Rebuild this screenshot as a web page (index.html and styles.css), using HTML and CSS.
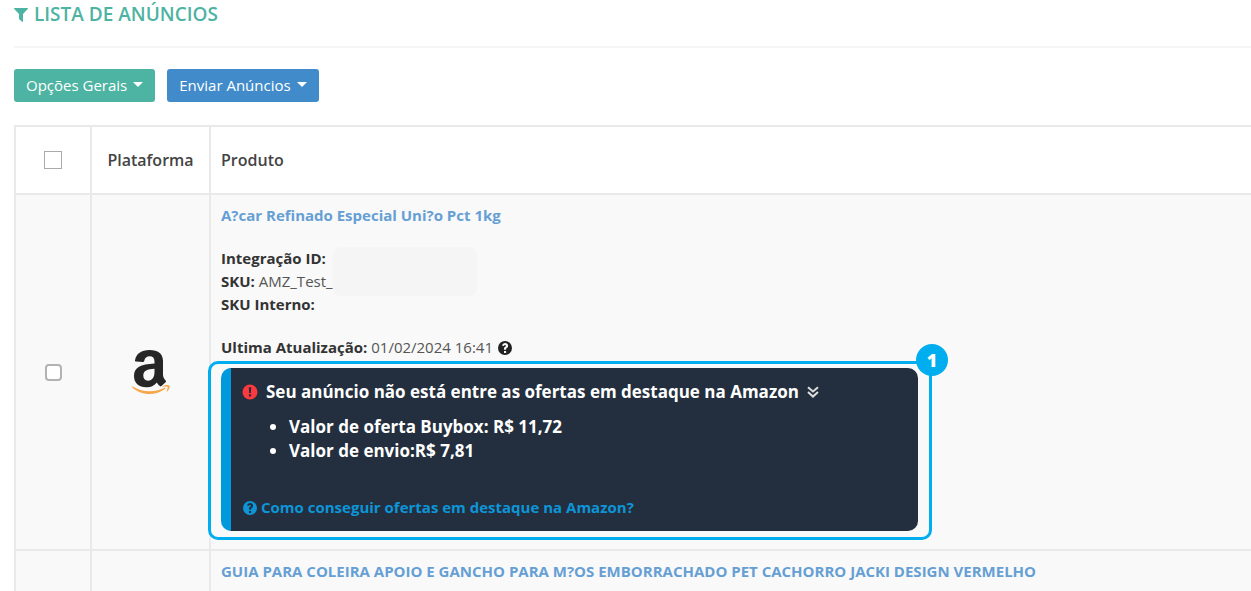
FILE: index.html
```html
<!DOCTYPE html>
<html lang="pt-BR">
<head>
  <meta charset="UTF-8">
  <meta name="viewport" content="width=device-width, initial-scale=1.0">
  <title>Lista de Anúncios</title>
  <link rel="stylesheet" href="styles.css">
</head>
<body>
  <!-- Ícones reutilizados -->
  <svg class="sprite" aria-hidden="true">
    <symbol id="icon-question" viewBox="0 0 16 16">
      <path fill-rule="evenodd" d="M8 1a7 7 0 1 0 0 14A7 7 0 0 0 8 1zM7 11h2.100v2H7zM5 5.600C5.500 4 6.500 3.100 8.100 3.100c1.700 0 3 1.100 3 2.600 0 1.200-.6 1.800-1.300 2.300-.5.300-.7.500-.7.900v.9H7V8.800c0-1 .5-1.600 1.200-2 .5-.3.700-.5.700-.9 0-.5-.4-.8-.9-.8-.6 0-.9.300-1.300 1z"/>
    </symbol>
  </svg>

  <header class="portlet-title">
    <svg class="icon-filter" viewBox="0 0 14 14" aria-hidden="true">
      <path d="M0.500 0h13c.5 0 .6.500.3.900L9 6v7.300c0 .5-.5.800-.9.400L5.300 11.200C5.100 11 5 10.800 5 10.600V6L.2.900C-.1.500 0 0 .5 0z"/>
    </svg>
    <h1>LISTA DE ANÚNCIOS</h1>
  </header>

  <div class="toolbar">
    <button type="button" class="btn btn-green">Opções Gerais <span class="caret"></span></button>
    <button type="button" class="btn btn-blue">Enviar Anúncios <span class="caret"></span></button>
  </div>

  <table class="table">
    <thead>
      <tr>
        <th class="col-check"><input type="checkbox" class="check check-all" aria-label="Selecionar todos"></th>
        <th class="col-platform">Plataforma</th>
        <th>Produto</th>
      </tr>
    </thead>
    <tbody>
      <tr>
        <td class="col-check"><input type="checkbox" class="check" aria-label="Selecionar anúncio"></td>
        <td class="col-platform">
          <svg class="logo-amazon" viewBox="0 0 38 46" role="img" aria-label="Amazon">
            <path fill="#262626" fill-rule="evenodd" d="M3 11.500C4 4.500 9.500 1 17.500 1 26 1 31 4.600 31 12v13.500c0 2.600 1 4 2.800 6.200.4.500.4 1 0 1.400l-4.300 4c-.6.500-1.100.5-1.600 0-1.500-1.300-2.100-2.200-3.100-3.700-3.100 3.300-5.700 4.800-10.600 4.800C6.700 38.200 2 34 2 27c0-8.500 6.500-11.500 20.500-12.400v-2c0-3.600-1.700-5.300-4.900-5.300-3 0-4.700 1.500-5.400 4.700-.2.800-.6 1.100-1.300 1L4 12.500c-.7-.1-1.100-.4-1-1zM22.500 19.700c-7.100.2-11.200 2-11.200 6.800 0 3.300 1.700 5.200 4.700 5.200 4.200 0 6.500-3.700 6.500-8.700z"/>
            <path fill="#f8a64a" d="M0 37.200c9 5.600 21.500 7 32.500 1.500.9-.4 1.500.5.700 1.100C23.500 47.500 8 46.500 0 38z"/>
            <path fill="#f8a64a" d="M30.500 37.300c2.300-1.600 5.500-1.700 6.900-.9.700 1.600-.4 4.600-2.200 6.100-.4.300-.8.100-.6-.4.500-1.300 1.400-3.500.9-4.200-.5-.6-3.100-.4-4.500-.2-.6.100-.9-.1-.5-.4z"/>
          </svg>
        </td>
        <td>
          <a href="#" class="product-link">A?car Refinado Especial Uni?o Pct 1kg</a>
          <div class="details">
            <div><b>Integração ID:</b></div>
            <div><b>SKU:</b> AMZ_Test_</div>
            <div><b>SKU Interno:</b></div>
            <span class="redacted"></span>
          </div>
          <div class="updated"><b>Ultima Atualização:</b> 01/02/2024 16:41 <svg class="icon icon-dark"><use href="#icon-question"/></svg></div>

          <div class="highlight">
            <section class="alert">
              <h2 class="alert-title">
                <svg class="icon" viewBox="0 0 16 16" aria-hidden="true">
                  <circle cx="8" cy="8" r="7.500" fill="#fb3a3f"/>
                  <path fill="#232f3e" d="M6.800 3.300h2.400L8.900 9H7.100zM6.900 10.300h2.200v2.300H6.900z"/>
                </svg>
                <span>Seu anúncio não está entre as ofertas em destaque na Amazon</span>
                <svg class="icon-down" viewBox="0 0 12 12" aria-hidden="true">
                  <path d="M1 1.200l5 4.300 5-4.300M1 6l5 4.600L11 6"/>
                </svg>
              </h2>
              <ul class="alert-list">
                <li>Valor de oferta Buybox: R$ 11,72</li>
                <li>Valor de envio:R$ 7,81</li>
              </ul>
              <a href="#" class="alert-link"><svg class="icon"><use href="#icon-question"/></svg>Como conseguir ofertas em destaque na Amazon?</a>
            </section>
            <span class="badge">1</span>
          </div>
        </td>
      </tr>
      <tr>
        <td class="col-check"></td>
        <td class="col-platform"></td>
        <td><a href="#" class="product-link">GUIA PARA COLEIRA APOIO E GANCHO PARA M?OS EMBORRACHADO PET CACHORRO JACKI DESIGN VERMELHO</a></td>
      </tr>
    </tbody>
  </table>
</body>
</html>
```

FILE: styles.css
```css
* {
  box-sizing: border-box;
}

body {
  margin: 0;
  padding-left: 14px;
  overflow: hidden;
  background: #fff;
  color: #555;
  font-family: "Open Sans", sans-serif;
  font-size: 15px;
  line-height: 23px;
}

a {
  text-decoration: none;
}

b {
  color: #333;
}

.sprite {
  display: none;
}

.icon {
  width: 16px;
  height: 16px;
  fill: currentColor;
  vertical-align: -3px;
}

.icon-dark {
  color: #222;
}

/* Título */
.portlet-title {
  display: flex;
  align-items: center;
  gap: 6px;
  height: 48px;
  padding-bottom: 17px;
  border-bottom: 2px solid #f5f5f5;
  color: #4db3a2;
}

.portlet-title h1 {
  margin: 0;
  font-size: 19px;
  font-weight: 600;
}

.icon-filter {
  width: 14px;
  height: 14px;
  fill: currentColor;
}

/* Botões */
.toolbar {
  display: flex;
  gap: 12px;
  padding: 21px 0 23px;
}

.btn {
  display: flex;
  align-items: center;
  gap: 6px;
  height: 33px;
  padding: 0 12px 2px;
  border: 0;
  border-radius: 3px;
  color: #fff;
  font-family: inherit;
  font-size: 15px;
  cursor: pointer;
}

.btn-green {
  background: #4db3a2;
}

.btn-blue {
  background: #428bca;
}

.caret {
  border-top: 5px solid #fff;
  border-left: 5px solid transparent;
  border-right: 5px solid transparent;
}

/* Tabela */
.table {
  width: 100%;
  border-collapse: collapse;
}

.table th,
.table td {
  padding: 9px 10px;
  border: 2px solid #e9e9e9;
  border-right: 0;
  text-align: left;
}

.table th {
  height: 68px;
  color: #444;
  font-size: 16px;
  font-weight: 600;
}

.table td {
  background: #f9f9f9;
}

.table .col-check {
  width: 76px;
  text-align: center;
}

.table .col-platform {
  width: 119px;
  text-align: center;
}

.check {
  appearance: none;
  display: block;
  width: 17px;
  height: 17px;
  margin: 0 auto;
  border: 2px solid #b2b2b2;
  border-radius: 4px;
  background: #fff;
}

.check-all {
  width: 18px;
  height: 18px;
  border: 1px solid #aaa;
  border-radius: 0;
}

.logo-amazon {
  display: block;
  width: 38px;
  height: 46px;
  margin: 0 auto;
}

.product-link {
  display: block;
  color: #659fd4;
  font-size: 15px;
  font-weight: 700;
}

.details {
  position: relative;
  margin: 20px 0;
}

/* Dados ocultos do vendedor */
.redacted {
  position: absolute;
  top: 0;
  left: 112px;
  width: 144px;
  height: 49px;
  border-radius: 8px;
  background: #f5f5f5;
}

/* Alerta da Amazon */
.highlight {
  position: relative;
  max-width: 697px;
  margin: 9px 0;
}

.highlight::before {
  content: "";
  position: absolute;
  inset: -7px -14px -9px -13px;
  border: 3px solid #00aeef;
  border-radius: 10px;
}

.alert {
  padding: 12px 11px;
  border-left: 10px solid #0099dc;
  border-radius: 10px;
  background: #232f3e;
  color: #fff;
  font-size: 17px;
  font-weight: 700;
}

.alert-title {
  display: flex;
  align-items: center;
  gap: 8px;
  margin: 0 0 12px;
  font-size: 17px;
}

.icon-down {
  width: 12px;
  height: 12px;
  fill: none;
  stroke: #ddd;
  stroke-width: 2;
}

.alert-list {
  margin: 0 0 33px;
  padding-left: 47px;
  line-height: 24px;
}

.alert-link {
  position: relative;
  display: flex;
  align-items: center;
  gap: 3px;
  color: #0d95d8;
  font-size: 15px;
}

.badge {
  position: absolute;
  top: -24px;
  right: -30px;
  width: 32px;
  height: 32px;
  border-radius: 50%;
  background: #00aeef;
  color: #fff;
  font-size: 18px;
  font-weight: 800;
  line-height: 32px;
  text-align: center;
}
```
